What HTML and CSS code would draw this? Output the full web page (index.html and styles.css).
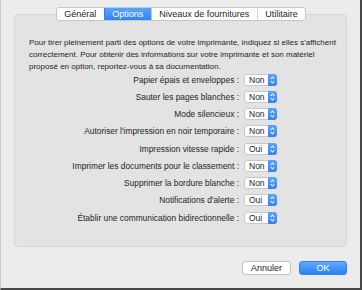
FILE: index.html
```html
<!DOCTYPE html>
<html lang="fr">
<head>
    <meta charset="UTF-8">
    <title>Options de l'imprimante</title>
    <link rel="stylesheet" href="styles.css">
</head>
<body>
    <div class="window">
        <div class="tabs">
            <div class="tab">Général</div>
            <div class="tab active">Options</div>
            <div class="tab">Niveaux de fournitures</div>
            <div class="tab">Utilitaire</div>
        </div>

        <div class="panel">
            <p class="intro">Pour tirer pleinement parti des options de votre imprimante, indiquez si elles s'affichent correctement. Pour obtenir des informations sur votre imprimante et son matériel proposé en option, reportez-vous à sa documentation.</p>

            <div class="rows">
                <div class="row"><span class="label">Papier épais et enveloppes :</span><div class="select"><span>Non</span><i class="arrows"></i></div></div>
                <div class="row"><span class="label">Sauter les pages blanches :</span><div class="select"><span>Non</span><i class="arrows"></i></div></div>
                <div class="row"><span class="label">Mode silencieux :</span><div class="select"><span>Non</span><i class="arrows"></i></div></div>
                <div class="row"><span class="label">Autoriser l'impression en noir temporaire :</span><div class="select"><span>Non</span><i class="arrows"></i></div></div>
                <div class="row"><span class="label">Impression vitesse rapide :</span><div class="select"><span>Oui</span><i class="arrows"></i></div></div>
                <div class="row"><span class="label">Imprimer les documents pour le classement :</span><div class="select"><span>Non</span><i class="arrows"></i></div></div>
                <div class="row"><span class="label">Supprimer la bordure blanche :</span><div class="select"><span>Non</span><i class="arrows"></i></div></div>
                <div class="row"><span class="label">Notifications d'alerte :</span><div class="select"><span>Oui</span><i class="arrows"></i></div></div>
                <div class="row"><span class="label">Établir une communication bidirectionnelle :</span><div class="select"><span>Oui</span><i class="arrows"></i></div></div>
            </div>
        </div>

        <div class="actions">
            <button class="button">Annuler</button>
            <button class="button primary">OK</button>
        </div>
    </div>
</body>
</html>
```

FILE: styles.css
```css
:root {
    --window-bg: #ececec;
    --panel-bg: #e3e3e3;
    --blue-top: #62a9fb;
    --blue-bottom: #2a7ff6;
    --text-color: #1e1e1e;
}

* {
    box-sizing: border-box;
    margin: 0;
    padding: 0;
}

body {
    font-family: 'Liberation Sans', Arial, sans-serif;
    color: var(--text-color);
    background: #fff;
}

.window {
    width: 362px;
    height: 290px;
    background: var(--window-bg);
    border-left: 1px solid #c9c9c9;
    border-right: 2px solid #474747;
    border-bottom: 2px solid #474747;
    padding: 7px 13px 0 13px;
    display: flex;
    flex-direction: column;
}

.tabs {
    align-self: center;
    display: flex;
    height: 14px;
    margin-left: 1px;
    background: #fff;
    border: 1px solid #c6c6c6;
    border-radius: 3px;
    position: relative;
    z-index: 1;
    font-size: 9px;
    line-height: 12px;
}

.tab {
    padding: 0 7.5px;
    border-left: 1px solid #d2d2d2;
    white-space: nowrap;
}

.tab:first-child {
    border-left: none;
}

.tab.active {
    background: linear-gradient(#5aa4fa, #2f84f6);
    color: #fff;
    border-left-color: #2f84f6;
}

.tab.active + .tab {
    border-left-color: #c6c6c6;
}

.panel {
    margin-top: -7px;
    height: 233px;
    background: var(--panel-bg);
    border: 1px solid #d8d8d8;
    border-radius: 4px;
    padding: 22px 0 0 14px;
}

.intro {
    font-size: 8px;
    line-height: 12px;
    width: 310px;
    margin-bottom: -2px;
}

.rows {
    display: flex;
    flex-direction: column;
    padding-right: 69px;
}

.row {
    height: 17.25px;
    display: flex;
    align-items: center;
    justify-content: flex-end;
}

.label {
    font-size: 8.4px;
    margin-right: 5px;
    white-space: nowrap;
}

.select {
    width: 33px;
    height: 12px;
    background: #fff;
    border: 1px solid #c8c8c8;
    border-radius: 3px;
    display: flex;
    align-items: center;
    font-size: 8.5px;
}

.select span {
    flex: 1;
    padding-left: 4px;
}

.arrows {
    width: 9px;
    height: 12px;
    margin: -1px -1px -1px 0;
    border-radius: 0 3px 3px 0;
    background: linear-gradient(#5aa4fa, #2f84f6);
    position: relative;
}

.arrows::before,
.arrows::after {
    content: '';
    position: absolute;
    left: 3px;
    width: 2px;
    height: 2px;
    border-left: 1px solid #fff;
    border-top: 1px solid #fff;
}

.arrows::before {
    top: 3px;
    transform: rotate(45deg);
}

.arrows::after {
    top: 6px;
    transform: rotate(225deg);
}

.actions {
    display: flex;
    justify-content: flex-end;
    gap: 8px;
    margin-top: 14px;
}

.button {
    font-family: inherit;
    font-size: 9px;
    height: 14px;
    width: 49px;
    background: #fff;
    color: var(--text-color);
    border: 1px solid #c3c3c3;
    border-radius: 3px;
    line-height: 12px;
}

.button.primary {
    width: 48px;
    background: linear-gradient(var(--blue-top), var(--blue-bottom));
    border-color: #2f84f6;
    color: #fff;
}
```
